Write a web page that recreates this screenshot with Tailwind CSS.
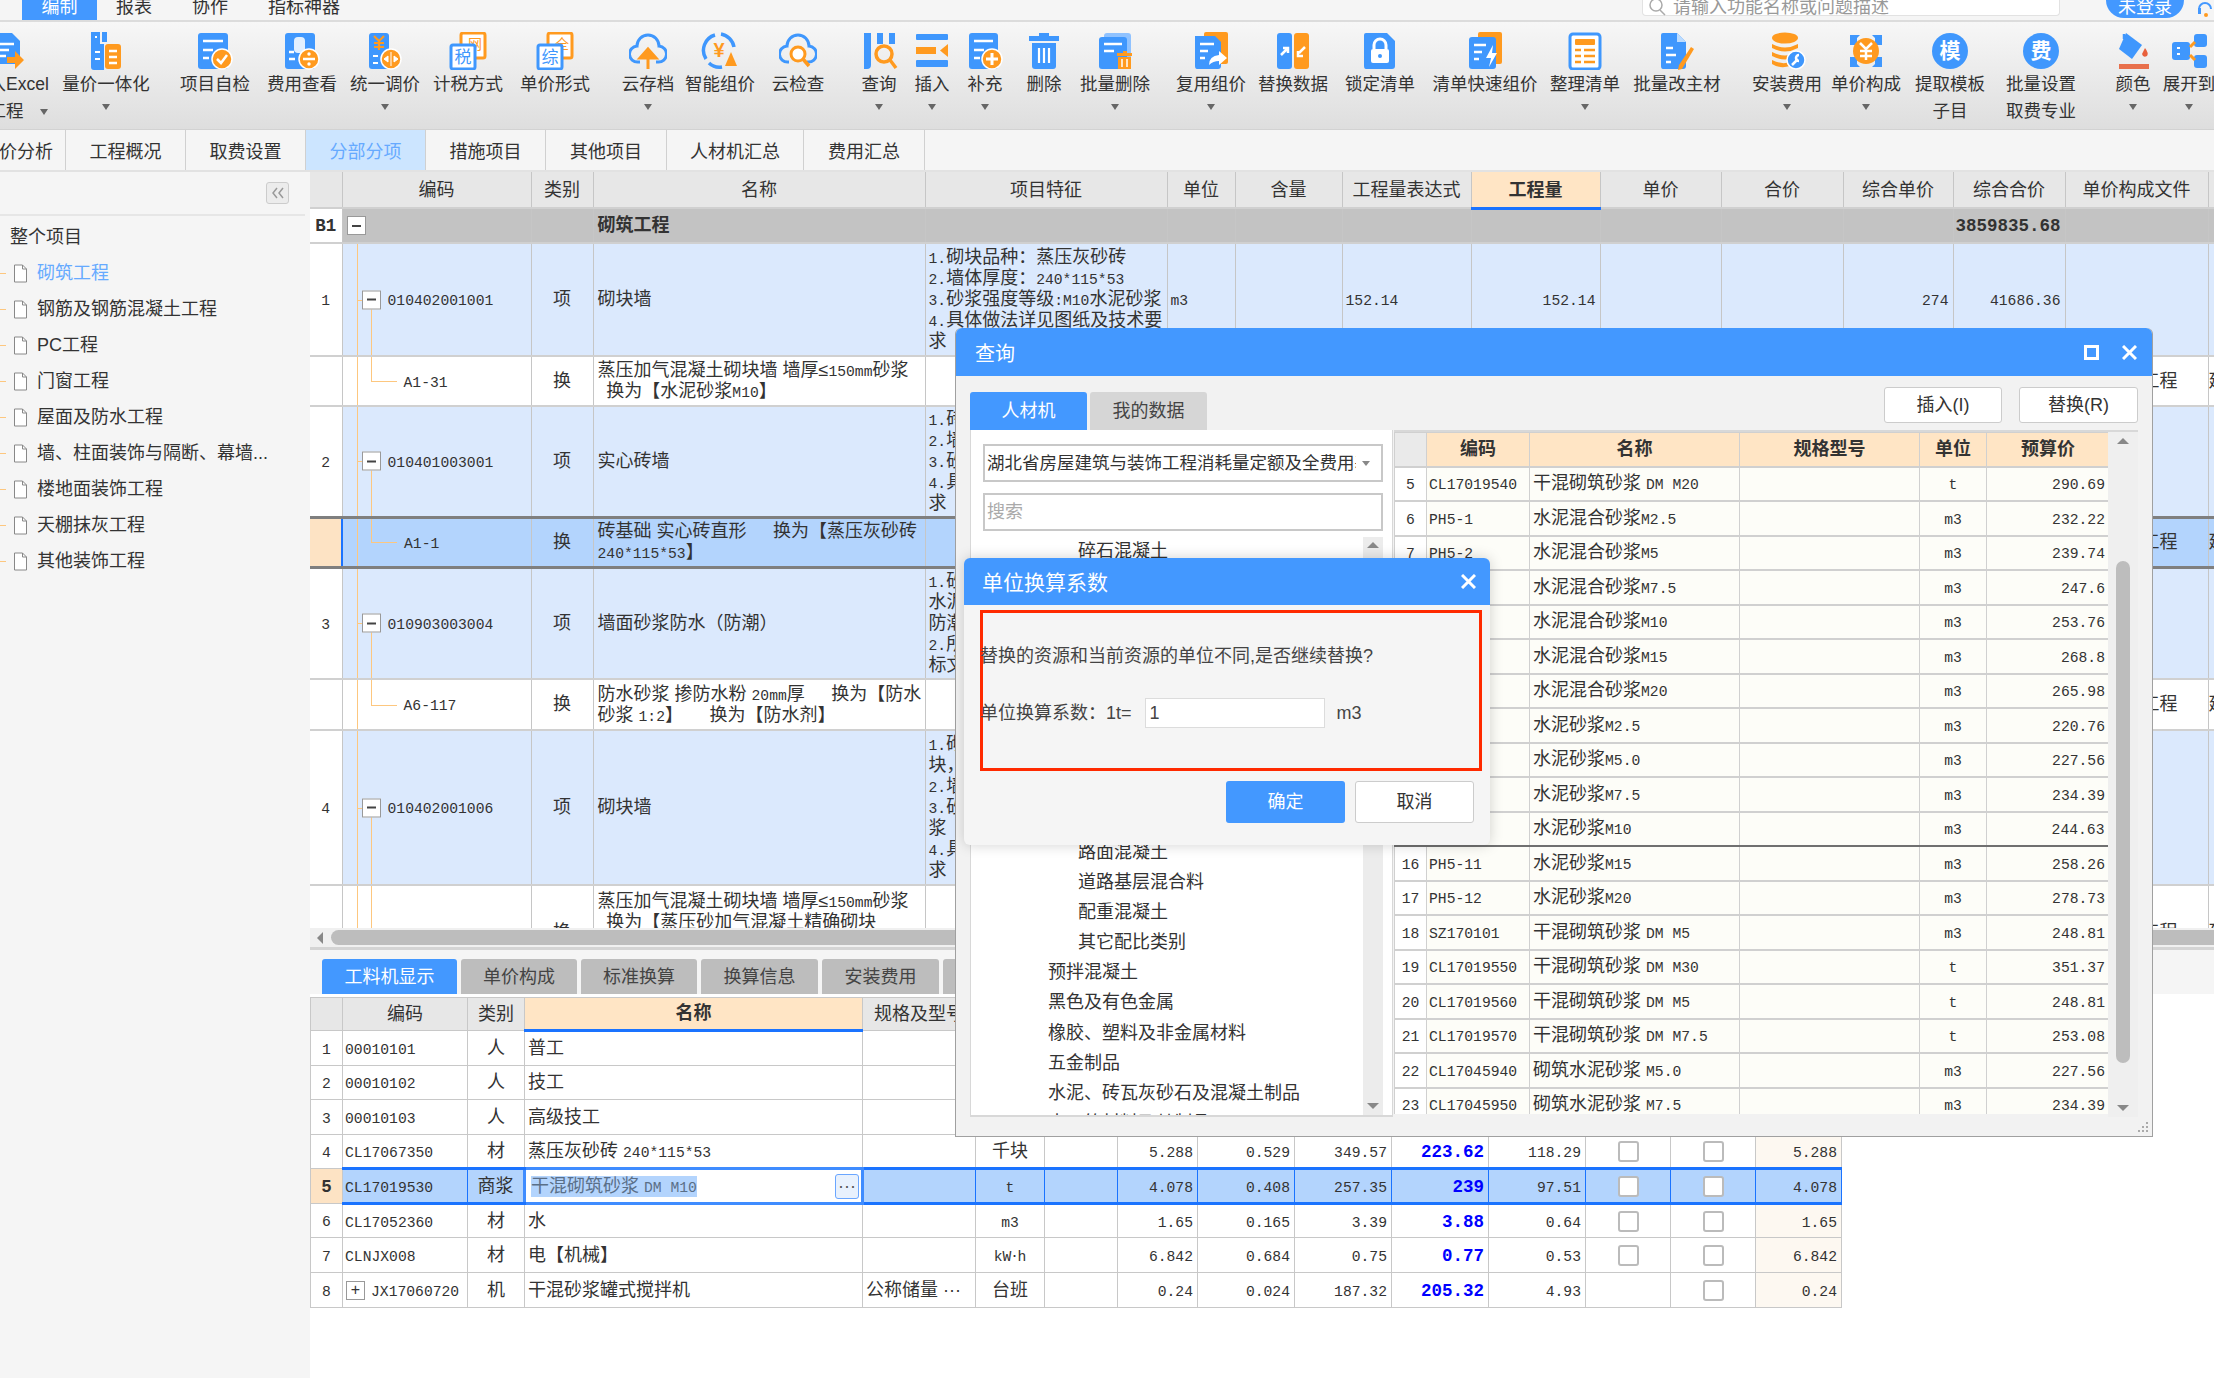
<!DOCTYPE html>
<html lang="zh-CN">
<head>
<meta charset="UTF-8">
<title>工程计价</title>
<script src="https://cdn.jsdelivr.net/npm/@tailwindcss/browser@4"></script>
</head>
<body class="relative w-[2214px] h-[1378px] overflow-hidden bg-white text-[18px] text-[#333] font-['Liberation_Sans','Noto_Sans_CJK_SC',sans-serif]">

<!-- 菜单栏 -->
<div class="flex items-start h-[22px] bg-[#f5f5f5] border-b-2 border-[#dcdcdc] overflow-hidden leading-[14px]">
  <div class="ml-[22px] w-[75px] h-[20px] bg-[#4398ff] text-white text-center">编制</div>
  <div class="ml-[19px]">报表</div>
  <div class="ml-[40px]">协作</div>
  <div class="ml-[40px]">指标神器</div>
  <div class="ml-auto w-[418px] h-[16px] bg-white rounded-b-[4px] border border-t-0 border-[#e2e2e2] flex items-start pl-[5px] text-[#999]">
    <svg class="w-[20px] h-[16px] shrink-0" viewBox="0 0 20 16"><circle cx="8" cy="5" r="6" fill="none" stroke="#aaa" stroke-width="1.5"/><path d="M12 10l5 5" stroke="#aaa" stroke-width="1.5"/></svg>
    <span class="ml-[5px]">请输入功能名称或问题描述</span>
  </div>
  <div class="ml-[46px] w-[78px] h-[18px] bg-[#4398ff] rounded-b-full text-white text-center">未登录</div>
  <svg class="ml-[13px] w-[17px] h-[18px] shrink-0" viewBox="0 0 17 18"><path d="M2 9a6 6 0 0 1 12 0" fill="none" stroke="#4398ff" stroke-width="2"/><rect x="1" y="8" width="3" height="6" fill="#4398ff"/><circle cx="9" cy="15" r="2" fill="#ff9a1f"/></svg>
</div>

<!-- 工具栏 -->
<div class="flex items-start h-[108px] pt-[10px] bg-gradient-to-b from-[#f7f7f7] to-[#dedede] border-b border-[#d2d2d2] overflow-hidden text-[17.5px]">
  <div class="ml-[-32px] w-[84px] shrink-0 flex flex-col items-center">
    <svg class="w-[38px] h-[38px]" viewBox="0 0 38 38"><path d="M4 1h17l8 8v23H4z" fill="#3f97fd"/><path d="M9 12h14M9 18h9M9 24h6" stroke="#fff" stroke-width="2.5"/><path d="M16 25h8v-6l9 9-9 9v-6h-8z" fill="#ff9a1f"/></svg>
    <span class="mt-[1px] leading-[27px] whitespace-nowrap">导入Excel</span>
    <span class="pl-[16px] leading-[27px] whitespace-nowrap flex items-center">工程<i class="ml-[16px] w-0 h-0 border-x-[4px] border-t-[6px] border-x-transparent border-t-[#666]"></i></span>
  </div>
  <div class="ml-[10px] w-[88px] shrink-0 flex flex-col items-center">
    <svg class="w-[38px] h-[38px]" viewBox="0 0 38 38"><path d="M4 0h9v12h4v26H7q-3 0-3-3z" fill="#3f97fd"/><path d="M15 0h5v10h-5z" fill="#3f97fd"/><path d="M8 5h2M8 20h5M8 27h5" stroke="#fff" stroke-width="2"/><rect x="18" y="12" width="16" height="25" rx="3" fill="#ff9a1f"/><path d="M22 19h8M22 25h8M22 31h8" stroke="#fff" stroke-width="2.5"/></svg>
    <span class="mt-[1px] leading-[27px] whitespace-nowrap">量价一体化</span>
    <i class="mt-[6px] w-0 h-0 border-x-[4px] border-t-[6px] border-x-transparent border-t-[#666]"></i>
  </div>
  <div class="ml-[30px] w-[70px] shrink-0 flex flex-col items-center">
    <svg class="w-[38px] h-[38px]" viewBox="0 0 38 38"><rect x="2" y="1" width="30" height="36" rx="3" fill="#3f97fd"/><path d="M7 9h20M7 18h10M7 26h6" stroke="#fff" stroke-width="2.5"/><circle cx="26" cy="27" r="10" fill="#ff9a1f" stroke="#fff" stroke-width="1.5"/><path d="M21 27l4 4 6-8" fill="none" stroke="#fff" stroke-width="2.5"/></svg>
    <span class="mt-[1px] leading-[27px] whitespace-nowrap">项目自检</span>
  </div>
  <div class="ml-[17px] w-[70px] shrink-0 flex flex-col items-center">
    <svg class="w-[38px] h-[38px]" viewBox="0 0 38 38"><rect x="2" y="1" width="30" height="36" rx="3" fill="#3f97fd"/><rect x="11" y="5" width="11" height="16" rx="4" fill="#fff" opacity=".85"/><path d="M6 20h5M6 27h6" stroke="#fff" stroke-width="2.5"/><circle cx="26" cy="27" r="10" fill="#ff9a1f" stroke="#fff" stroke-width="1.5"/><path d="M20 27h12" stroke="#fff" stroke-width="2.5"/><circle cx="26" cy="22" r="1.7" fill="#fff"/><circle cx="26" cy="32" r="1.7" fill="#fff"/></svg>
    <span class="mt-[1px] leading-[27px] whitespace-nowrap">费用查看</span>
  </div>
  <div class="ml-[13px] w-[70px] shrink-0 flex flex-col items-center">
    <svg class="w-[38px] h-[38px]" viewBox="0 0 38 38"><rect x="3" y="1" width="20" height="36" rx="3" fill="#3f97fd"/><path d="M8 4l5 5 5-5M13 9v9M8 11h10M8 15h10" fill="none" stroke="#ff9a1f" stroke-width="2.2"/><path d="M7 24h5M7 31h5" stroke="#fff" stroke-width="2"/><circle cx="25" cy="27" r="10" fill="#ff9a1f" stroke="#fff" stroke-width="1.5"/><path d="M25 20v14M22 24l-4 3 4 3zM28 24l4 3-4 3z" fill="#fff" stroke="#fff"/></svg>
    <span class="mt-[1px] leading-[27px] whitespace-nowrap">统一调价</span>
    <i class="mt-[6px] w-0 h-0 border-x-[4px] border-t-[6px] border-x-transparent border-t-[#666]"></i>
  </div>
  <div class="ml-[13px] w-[70px] shrink-0 flex flex-col items-center">
    <svg class="w-[38px] h-[38px]" viewBox="0 0 38 38"><rect x="12" y="1" width="24" height="25" rx="2" fill="#fff" stroke="#ff9a1f" stroke-width="3"/><text x="26" y="17" font-size="14" fill="#ff9a1f" text-anchor="middle">网</text><rect x="2" y="13" width="24" height="24" rx="2" fill="#fff" stroke="#3f97fd" stroke-width="3"/><text x="14" y="31" font-size="17" fill="#3f97fd" text-anchor="middle">税</text></svg>
    <span class="mt-[1px] leading-[27px] whitespace-nowrap">计税方式</span>
  </div>
  <div class="ml-[17px] w-[70px] shrink-0 flex flex-col items-center">
    <svg class="w-[38px] h-[38px]" viewBox="0 0 38 38"><rect x="12" y="1" width="24" height="25" rx="2" fill="#fff" stroke="#ff9a1f" stroke-width="3"/><text x="26" y="17" font-size="14" fill="#ff9a1f" text-anchor="middle">全</text><rect x="2" y="13" width="24" height="24" rx="2" fill="#fff" stroke="#3f97fd" stroke-width="3"/><text x="14" y="31" font-size="17" fill="#3f97fd" text-anchor="middle">综</text></svg>
    <span class="mt-[1px] leading-[27px] whitespace-nowrap">单价形式</span>
  </div>
  <div class="ml-[32px] w-[52px] shrink-0 flex flex-col items-center">
    <svg class="w-[38px] h-[38px]" viewBox="0 0 38 38"><path d="M11 30H9a8 8 0 0 1-1-16 11 11 0 0 1 22 0 8 8 0 0 1-1 16h-2" fill="none" stroke="#3f97fd" stroke-width="3"/><path d="M19 37V24M11 26l8-9 8 9z" fill="#ff9a1f" stroke="#ff9a1f" stroke-width="3"/></svg>
    <span class="mt-[1px] leading-[27px] whitespace-nowrap">云存档</span>
    <i class="mt-[6px] w-0 h-0 border-x-[4px] border-t-[6px] border-x-transparent border-t-[#666]"></i>
  </div>
  <div class="ml-[11px] w-[70px] shrink-0 flex flex-col items-center">
    <svg class="w-[38px] h-[38px]" viewBox="0 0 38 38"><path d="M14 3a16 16 0 0 0-9 24M20 2a16 16 0 0 1 13 13M8 31a15 15 0 0 0 13 4" fill="none" stroke="#3f97fd" stroke-width="3.5"/><text x="18" y="25" font-size="20" font-weight="700" fill="#ff9a1f" text-anchor="middle">¥</text><path d="M30 20l6 14h-12z" fill="#ff9a1f"/></svg>
    <span class="mt-[1px] leading-[27px] whitespace-nowrap">智能组价</span>
  </div>
  <div class="ml-[17px] w-[52px] shrink-0 flex flex-col items-center">
    <svg class="w-[38px] h-[38px]" viewBox="0 0 38 38"><path d="M10 30H9a8 8 0 0 1-1-16 11 11 0 0 1 22 0 8 8 0 0 1-1 16h-1" fill="none" stroke="#3f97fd" stroke-width="3"/><circle cx="19" cy="22" r="7" fill="#fff" stroke="#ff9a1f" stroke-width="3"/><path d="M24 27l6 7" stroke="#ff9a1f" stroke-width="3.5"/></svg>
    <span class="mt-[1px] leading-[27px] whitespace-nowrap">云检查</span>
  </div>
  <div class="ml-[37px] w-[36px] shrink-0 flex flex-col items-center">
    <svg class="w-[38px] h-[38px]" viewBox="0 0 38 38"><path d="M4 1h7v32q0 4-4 4H4zM17 1h6v11h-6zM29 1h6v11h-6z" fill="#3f97fd"/><circle cx="24" cy="22" r="8" fill="none" stroke="#ff9a1f" stroke-width="3.5"/><path d="M30 28l6 8" stroke="#ff9a1f" stroke-width="3.5"/></svg>
    <span class="mt-[1px] leading-[27px] whitespace-nowrap">查询</span>
    <i class="mt-[6px] w-0 h-0 border-x-[4px] border-t-[6px] border-x-transparent border-t-[#666]"></i>
  </div>
  <div class="ml-[17px] w-[36px] shrink-0 flex flex-col items-center">
    <svg class="w-[38px] h-[38px]" viewBox="0 0 38 38"><rect x="3" y="2" width="32" height="6" rx="1" fill="#3f97fd"/><rect x="3" y="15" width="20" height="7" fill="#ff9a1f"/><path d="M35 12v13l-8-6.500z" fill="#ff9a1f"/><rect x="3" y="28" width="32" height="7" rx="1" fill="#3f97fd"/></svg>
    <span class="mt-[1px] leading-[27px] whitespace-nowrap">插入</span>
    <i class="mt-[6px] w-0 h-0 border-x-[4px] border-t-[6px] border-x-transparent border-t-[#666]"></i>
  </div>
  <div class="ml-[17px] w-[36px] shrink-0 flex flex-col items-center">
    <svg class="w-[38px] h-[38px]" viewBox="0 0 38 38"><rect x="3" y="1" width="29" height="36" rx="3" fill="#3f97fd"/><path d="M8 9h19M8 18h10M8 26h6" stroke="#fff" stroke-width="2.5"/><circle cx="26" cy="27" r="10" fill="#ff9a1f" stroke="#fff" stroke-width="1.5"/><path d="M20 27h12M26 21v12" stroke="#fff" stroke-width="3"/></svg>
    <span class="mt-[1px] leading-[27px] whitespace-nowrap">补充</span>
    <i class="mt-[6px] w-0 h-0 border-x-[4px] border-t-[6px] border-x-transparent border-t-[#666]"></i>
  </div>
  <div class="ml-[23px] w-[36px] shrink-0 flex flex-col items-center">
    <svg class="w-[38px] h-[38px]" viewBox="0 0 38 38"><path d="M14 1h10v3h10v5H4V4h10z" fill="#3f97fd"/><path d="M7 11h24v23q0 3-3 3H10q-3 0-3-3z" fill="#3f97fd"/><path d="M14 16v15M19 16v15M24 16v15" stroke="#fff" stroke-width="2.2"/></svg>
    <span class="mt-[1px] leading-[27px] whitespace-nowrap">删除</span>
  </div>
  <div class="ml-[18px] w-[70px] shrink-0 flex flex-col items-center">
    <svg class="w-[38px] h-[38px]" viewBox="0 0 38 38"><rect x="8" y="1" width="27" height="32" rx="3" fill="#8fc2ff"/><rect x="3" y="5" width="28" height="32" rx="3" fill="#3f97fd"/><path d="M8 12h18M8 19h10" stroke="#fff" stroke-width="2.5"/><path d="M21 21h6v-2h4v2h5v3H21zM22 25h13v12H22z" fill="#ff9a1f"/><path d="M26 27v8M31 27v8" stroke="#fff" stroke-width="1.5"/></svg>
    <span class="mt-[1px] leading-[27px] whitespace-nowrap">批量删除</span>
    <i class="mt-[6px] w-0 h-0 border-x-[4px] border-t-[6px] border-x-transparent border-t-[#666]"></i>
  </div>
  <div class="ml-[26px] w-[70px] shrink-0 flex flex-col items-center">
    <svg class="w-[38px] h-[38px]" viewBox="0 0 38 38"><rect x="12" y="0" width="24" height="32" rx="2" fill="#ff9a1f"/><path d="M3 4h20l6 6v24q0 3-3 3H5q-2 0-2-3z" fill="#3f97fd"/><path d="M8 12h14M8 19h8M8 26h5" stroke="#fff" stroke-width="2.5"/><path d="M17 33q0-9 10-10v-4l8 7-8 7v-4q-6 0-10 4z" fill="#fff"/></svg>
    <span class="mt-[1px] leading-[27px] whitespace-nowrap">复用组价</span>
    <i class="mt-[6px] w-0 h-0 border-x-[4px] border-t-[6px] border-x-transparent border-t-[#666]"></i>
  </div>
  <div class="ml-[12px] w-[70px] shrink-0 flex flex-col items-center">
    <svg class="w-[38px] h-[38px]" viewBox="0 0 38 38"><rect x="3" y="1" width="15" height="36" rx="3" fill="#3f97fd"/><rect x="20" y="1" width="15" height="36" rx="3" fill="#ff9a1f"/><path d="M7 23l6-6M9 16h5v5" fill="none" stroke="#fff" stroke-width="2.5"/><path d="M31 15l-6 6M29 24h-5v-5" fill="none" stroke="#fff" stroke-width="2.5"/></svg>
    <span class="mt-[1px] leading-[27px] whitespace-nowrap">替换数据</span>
  </div>
  <div class="ml-[17px] w-[70px] shrink-0 flex flex-col items-center">
    <svg class="w-[38px] h-[38px]" viewBox="0 0 38 38"><path d="M5 1h21l8 8v25q0 3-3 3H5q-2 0-2-3V3q0-2 2-2z" fill="#3f97fd"/><rect x="10" y="17" width="18" height="14" rx="2" fill="#fff"/><path d="M13 17v-4a6 6 0 0 1 12 0v4" fill="none" stroke="#fff" stroke-width="3"/><circle cx="19" cy="24" r="2" fill="#3f97fd"/></svg>
    <span class="mt-[1px] leading-[27px] whitespace-nowrap">锁定清单</span>
  </div>
  <div class="ml-[17px] w-[106px] shrink-0 flex flex-col items-center">
    <svg class="w-[38px] h-[38px]" viewBox="0 0 38 38"><rect x="12" y="0" width="24" height="32" rx="2" fill="#ff9a1f"/><rect x="3" y="5" width="27" height="32" rx="3" fill="#3f97fd"/><path d="M8 13h12M8 20h8M8 27h5" stroke="#fff" stroke-width="2.5"/><path d="M27 13l-7 13h5l-2 9 8-14h-5z" fill="#fff"/></svg>
    <span class="mt-[1px] leading-[27px] whitespace-nowrap">清单快速组价</span>
  </div>
  <div class="ml-[12px] w-[70px] shrink-0 flex flex-col items-center">
    <svg class="w-[38px] h-[38px]" viewBox="0 0 38 38"><rect x="4" y="2" width="30" height="35" rx="3" fill="#fff" stroke="#3f97fd" stroke-width="3"/><rect x="9" y="7" width="20" height="6" rx="1" fill="#ff9a1f"/><path d="M9 18h6M18 18h11M9 24h6M18 24h11M9 30h6M18 30h11" stroke="#ff9a1f" stroke-width="2.500"/></svg>
    <span class="mt-[1px] leading-[27px] whitespace-nowrap">整理清单</span>
    <i class="mt-[6px] w-0 h-0 border-x-[4px] border-t-[6px] border-x-transparent border-t-[#666]"></i>
  </div>
  <div class="ml-[13px] w-[88px] shrink-0 flex flex-col items-center">
    <svg class="w-[38px] h-[38px]" viewBox="0 0 38 38"><path d="M5 1h14l9 9v24q0 3-3 3H5q-2 0-2-3V3q0-2 2-2z" fill="#3f97fd"/><path d="M19 1l9 9h-9z" fill="#bcdcff"/><path d="M8 16h7M8 23h10M8 30h5" stroke="#fff" stroke-width="2.5"/><path d="M33 15l3 2-12 20-4 1 1-5z" fill="#ff9a1f"/></svg>
    <span class="mt-[1px] leading-[27px] whitespace-nowrap">批量改主材</span>
  </div>
  <div class="ml-[31px] w-[70px] shrink-0 flex flex-col items-center">
    <svg class="w-[38px] h-[38px]" viewBox="0 0 38 38"><ellipse cx="17" cy="6" rx="13" ry="5.500" fill="#ff9a1f"/><path d="M4 12q13 7 26 0v4q-13 7-26 0zM4 20q13 7 26 0v4q-13 7-26 0zM4 28q10 5 18 2v4q-10 3-18-2z" fill="#ff9a1f"/><circle cx="28" cy="28" r="9" fill="#3f97fd" stroke="#fff" stroke-width="1.5"/><path d="M24 33l6-6M31 23a3 3 0 0 0 0 6" fill="none" stroke="#fff" stroke-width="2.500"/></svg>
    <span class="mt-[1px] leading-[27px] whitespace-nowrap">安装费用</span>
    <i class="mt-[6px] w-0 h-0 border-x-[4px] border-t-[6px] border-x-transparent border-t-[#666]"></i>
  </div>
  <div class="ml-[9px] w-[70px] shrink-0 flex flex-col items-center">
    <svg class="w-[38px] h-[38px]" viewBox="0 0 38 38"><path d="M3 3h10l-3 3v7H3zM35 3H25l3 3v7h7zM3 35h10l-3-3v-7H3zM35 35H25l3-3v-7h7z" fill="#3f97fd"/><circle cx="19" cy="19" r="13" fill="#ff9a1f"/><path d="M13 11l6 6 6-6M19 17v11M13 19h12M13 24h12" fill="none" stroke="#fff" stroke-width="2.500"/></svg>
    <span class="mt-[1px] leading-[27px] whitespace-nowrap">单价构成</span>
    <i class="mt-[6px] w-0 h-0 border-x-[4px] border-t-[6px] border-x-transparent border-t-[#666]"></i>
  </div>
  <div class="ml-[14px] w-[70px] shrink-0 flex flex-col items-center">
    <svg class="w-[38px] h-[38px]" viewBox="0 0 38 38"><circle cx="19" cy="19" r="18" fill="#3f97fd"/><text x="19" y="26" font-size="21" font-weight="700" fill="#fff" text-anchor="middle">模</text></svg>
    <span class="mt-[1px] leading-[27px] whitespace-nowrap">提取模板</span>
    <span class="leading-[27px] whitespace-nowrap">子目</span>
  </div>
  <div class="ml-[21px] w-[70px] shrink-0 flex flex-col items-center">
    <svg class="w-[38px] h-[38px]" viewBox="0 0 38 38"><circle cx="19" cy="19" r="18" fill="#3f97fd"/><text x="19" y="26" font-size="21" font-weight="700" fill="#fff" text-anchor="middle">费</text></svg>
    <span class="mt-[1px] leading-[27px] whitespace-nowrap">批量设置</span>
    <span class="leading-[27px] whitespace-nowrap">取费专业</span>
  </div>
  <div class="ml-[39px] w-[36px] shrink-0 flex flex-col items-center">
    <svg class="w-[38px] h-[38px]" viewBox="0 0 38 38"><path d="M12 1l16 12-10 14L5 17z" fill="#3f97fd"/><path d="M10 7V2" stroke="#3f97fd" stroke-width="2.500"/><path d="M31 16q4 5 2 8-4 2-5-2z" fill="#e8603c"/><rect x="5" y="32" width="30" height="5" fill="#e8704c"/></svg>
    <span class="mt-[1px] leading-[27px] whitespace-nowrap">颜色</span>
    <i class="mt-[6px] w-0 h-0 border-x-[4px] border-t-[6px] border-x-transparent border-t-[#666]"></i>
  </div>
  <div class="ml-[12px] w-[52px] shrink-0 flex flex-col items-center">
    <svg class="w-[38px] h-[38px]" viewBox="0 0 38 38"><rect x="2" y="10" width="18" height="18" rx="3" fill="#3f97fd"/><path d="M7 16h3M7 22h3" stroke="#fff" stroke-width="2"/><rect x="24" y="2" width="13" height="13" rx="3" fill="#3f97fd"/><rect x="24" y="23" width="13" height="13" rx="3" fill="#3f97fd"/><path d="M20 15l5-5M20 23l5 5" stroke="#ff9a1f" stroke-width="3"/></svg>
    <span class="mt-[1px] leading-[27px] whitespace-nowrap">展开到</span>
    <i class="mt-[6px] w-0 h-0 border-x-[4px] border-t-[6px] border-x-transparent border-t-[#666]"></i>
  </div>
</div>

<!-- 页签 -->
<div class="flex h-[42px] bg-[#f5f5f5] border-b-2 border-[#e2e2e2]">
  <div class="w-[66px] pt-[4px] flex items-center justify-end pr-[12px] border-r border-[#d0d0d0] whitespace-nowrap overflow-hidden">价分析</div>
  <div class="w-[120px] pt-[4px] flex items-center justify-center border-r border-[#d0d0d0]">工程概况</div>
  <div class="w-[120px] pt-[4px] flex items-center justify-center border-r border-[#d0d0d0]">取费设置</div>
  <div class="w-[120px] pt-[4px] flex items-center justify-center border-r border-[#d0d0d0] bg-[#cce5ff] text-[#66aaff]">分部分项</div>
  <div class="w-[120px] pt-[4px] flex items-center justify-center border-r border-[#d0d0d0]">措施项目</div>
  <div class="w-[121px] pt-[4px] flex items-center justify-center border-r border-[#d0d0d0]">其他项目</div>
  <div class="w-[137px] pt-[4px] flex items-center justify-center border-r border-[#d0d0d0]">人材机汇总</div>
  <div class="w-[121px] pt-[4px] flex items-center justify-center border-r border-[#d0d0d0]">费用汇总</div>
</div>

<div class="flex h-[1206px]">
  <!-- 左侧项目树 -->
  <div class="w-[310px] shrink-0 bg-[#f5f5f5] pr-[5px]">
    <div class="h-[44px] border-b-2 border-[#e6e6e6] flex justify-end items-start pt-[10px] pr-[16px]">
      <div class="w-[23px] h-[22px] rounded-[3px] border border-[#ccc] bg-[#ececec] flex items-center justify-center">
        <svg class="w-[14px] h-[12px]" viewBox="0 0 14 12"><path d="M6 1L2 6l4 5M12 1L8 6l4 5" fill="none" stroke="#999" stroke-width="1.500"/></svg>
      </div>
    </div>
    <div id="tree" class="pt-[3px] leading-[36px]"></div>
  </div>

  <!-- 右侧表格区 -->
  <div class="flex-1 min-w-0 flex flex-col">
    <div class="h-[756px] overflow-hidden">
      <table class="table-fixed border-collapse w-[1904px] leading-[21px]">
        <colgroup>
          <col class="w-[32px]"><col class="w-[189px]"><col class="w-[62px]"><col class="w-[332px]"><col class="w-[242px]"><col class="w-[68px]"><col class="w-[107px]"><col class="w-[129px]"><col class="w-[129px]"><col class="w-[121px]"><col class="w-[122px]"><col class="w-[110px]"><col class="w-[112px]"><col class="w-[143px]"><col class="w-[6px]">
        </colgroup>
        <tbody id="main"></tbody>
      </table>
    </div>
    <div class="h-[19px] bg-[#f0f0f0] flex items-center pl-[7px]">
      <i class="w-0 h-0 border-y-[6px] border-r-[6px] border-y-transparent border-r-[#888]"></i>
      <div class="ml-[8px] flex-1 h-[15px] rounded-l-full bg-[#bdbdbd]"></div>
    </div>
    <div class="h-[3px] bg-[#d4d4d4]"></div>
    <div class="h-[44px] bg-[#f5f5f5] flex items-end pl-[12px] gap-[4px]">
      <div class="w-[135px] h-[35px] pt-[2px] rounded-t-[3px] bg-[#4398ff] text-white flex items-center justify-center">工料机显示</div>
      <div class="w-[116px] h-[35px] pt-[2px] rounded-t-[3px] bg-[#bdbdbd] text-[#444] flex items-center justify-center">单价构成</div>
      <div class="w-[116px] h-[35px] pt-[2px] rounded-t-[3px] bg-[#bdbdbd] text-[#444] flex items-center justify-center">标准换算</div>
      <div class="w-[117px] h-[35px] pt-[2px] rounded-t-[3px] bg-[#bdbdbd] text-[#444] flex items-center justify-center">换算信息</div>
      <div class="w-[117px] h-[35px] pt-[2px] rounded-t-[3px] bg-[#bdbdbd] text-[#444] flex items-center justify-center">安装费用</div>
      <div class="w-[116px] h-[35px] rounded-t-[3px] bg-[#bdbdbd]"></div>
    </div>
    <div class="mt-[3px]">
      <table class="table-fixed border-collapse w-[1531px] leading-[21px]">
        <colgroup>
          <col class="w-[32px]"><col class="w-[125px]"><col class="w-[57px]"><col class="w-[338px]"><col class="w-[113px]"><col class="w-[69px]"><col class="w-[73px]"><col class="w-[80px]"><col class="w-[97px]"><col class="w-[97px]"><col class="w-[97px]"><col class="w-[97px]"><col class="w-[85px]"><col class="w-[85px]"><col class="w-[86px]">
        </colgroup>
        <tbody id="sub"></tbody>
      </table>
    </div>
  </div>
</div>

<!-- 查询窗口 -->
<div class="absolute left-[955px] top-[328px] w-[1198px] h-[809px] rounded-t-[6px] bg-[#f2f2f2] border border-[#a0a0a0] border-t-0 flex flex-col">
  <div class="h-[48px] shrink-0 rounded-t-[6px] bg-[#4398ff] text-white text-[20px] flex items-center pl-[19px] pr-[15px]">
    <span class="pt-[4px]">查询</span>
    <svg class="ml-auto w-[15px] h-[15px]" viewBox="0 0 15 15"><rect x="1.500" y="1.500" width="12" height="12" fill="none" stroke="#fff" stroke-width="3"/></svg>
    <svg class="ml-[23px] w-[15px] h-[15px]" viewBox="0 0 15 15"><path d="M1 1l13 13M14 1L1 14" stroke="#fff" stroke-width="3"/></svg>
  </div>
  <div class="h-[54px] shrink-0 flex items-end pl-[14px] pr-[14px]">
    <div class="w-[117px] h-[38px] rounded-t-[3px] bg-[#4398ff] text-white flex items-center justify-center">人材机</div>
    <div class="ml-[3px] w-[117px] h-[38px] rounded-t-[3px] bg-[#d6d6d6] text-[#444] flex items-center justify-center">我的数据</div>
    <div class="ml-auto mb-[7px] w-[118px] h-[36px] rounded-[3px] bg-white border border-[#ccc] flex items-center justify-center">插入(I)</div>
    <div class="ml-[17px] mb-[7px] w-[119px] h-[36px] rounded-[3px] bg-white border border-[#ccc] flex items-center justify-center">替换(R)</div>
  </div>
  <div class="h-[687px] shrink-0 flex pl-[14px] pr-[14px]">
    <div class="w-[423px] shrink-0 bg-white border-b-2 border-x border-[#d8d8d8] pl-[12px] pr-[9px] pt-[14px] flex flex-col">
      <div class="h-[38px] shrink-0 border-2 border-[#c8c8c8] flex items-center pl-[2px] pr-[11px] text-[17.5px] overflow-hidden">
        <span class="flex-1 whitespace-nowrap overflow-hidden">湖北省房屋建筑与装饰工程消耗量定额及全费用基价表</span>
        <i class="ml-[6px] w-0 h-0 border-x-[4px] border-t-[5px] border-x-transparent border-t-[#888]"></i>
      </div>
      <div class="mt-[11px] h-[38px] shrink-0 border-2 border-[#c8c8c8] flex items-center pl-[2px] text-[#aaa]">搜索</div>
      <div class="flex-1 min-h-0 flex">
        <div id="res" class="flex-1 pt-[5px] overflow-hidden text-[#333]"></div>
        <div class="w-[20px] shrink-0 mt-[6px] mb-0 bg-[#ececec] flex flex-col items-center justify-between pt-[5px] pb-[6px]">
          <i class="w-0 h-0 border-x-[6px] border-b-[6px] border-x-transparent border-b-[#888]"></i>
          <i class="w-0 h-0 border-x-[6px] border-t-[6px] border-x-transparent border-t-[#888]"></i>
        </div>
      </div>
    </div>
    <div class="ml-[1px] flex-1 min-w-0 flex border-t-2 border-[#d8d8d8]">
      <div class="w-[716px] h-[682px] overflow-hidden">
        <table class="table-fixed border-collapse w-[715px] leading-[21px]">
          <colgroup><col class="w-[32px]"><col class="w-[103px]"><col class="w-[210px]"><col class="w-[180px]"><col class="w-[67px]"><col class="w-[123px]"></colgroup>
          <tbody id="qry"></tbody>
        </table>
      </div>
      <div class="w-[30px] h-[685px] bg-[#efefef] flex flex-col items-center pt-[6px] pb-[6px]">
        <i class="w-0 h-0 border-x-[6px] border-b-[6px] border-x-transparent border-b-[#888]"></i>
        <div class="mt-[117px] w-[14px] h-[502px] rounded-full bg-[#bdbdbd]"></div>
        <i class="mt-auto w-0 h-0 border-x-[6px] border-t-[6px] border-x-transparent border-t-[#888]"></i>
      </div>
    </div>
  </div>
  <div class="flex-1 flex justify-end items-end pr-[3px] pb-[3px]">
    <svg class="w-[12px] h-[12px]" viewBox="0 0 12 12" fill="#aaa"><rect x="9" y="1" width="2" height="2"/><rect x="5" y="5" width="2" height="2"/><rect x="9" y="5" width="2" height="2"/><rect x="1" y="9" width="2" height="2"/><rect x="5" y="9" width="2" height="2"/><rect x="9" y="9" width="2" height="2"/></svg>
  </div>
</div>

<!-- 单位换算系数 -->
<div class="absolute left-[964px] top-[558px] w-[526px] h-[287px] rounded-[6px] bg-[#f5f5f5] shadow-[0_0_14px_rgba(0,0,0,0.18)]">
  <div class="h-[47px] rounded-t-[6px] bg-[#4398ff] text-white text-[21px] flex items-center pl-[18px] pr-[14px]">
    <span class="pt-[2px]">单位换算系数</span>
    <svg class="ml-auto w-[15px] h-[15px]" viewBox="0 0 15 15"><path d="M1 1l13 13M14 1L1 14" stroke="#fff" stroke-width="3"/></svg>
  </div>
  <div class="mt-[5px] ml-[16px] mr-[8px] h-[161px] border-[3px] border-[#ff2a00] flex flex-col text-[#444]">
    <div class="mt-[30px] ml-[-3px] whitespace-nowrap leading-[27px]">替换的资源和当前资源的单位不同,是否继续替换?</div>
    <div class="mt-[28px] ml-[-3px] flex items-center whitespace-nowrap">
      <span>单位换算系数：1t=</span>
      <div class="ml-[13px] w-[180px] h-[30px] bg-white border border-[#dcdcdc] flex items-center pl-[4px]">1</div>
      <span class="ml-[12px]">m3</span>
    </div>
  </div>
  <div class="mt-[10px] flex justify-end pr-[16px] gap-[10px]">
    <div class="w-[119px] h-[42px] rounded-[3px] bg-[#4398ff] text-white flex items-center justify-center">确定</div>
    <div class="w-[119px] h-[42px] rounded-[3px] bg-white border border-[#ccc] flex items-center justify-center">取消</div>
  </div>
</div>

<script>
// 半角字符用等宽字体，宽度接近宋体
const M = s => String(s).replace(/[\x21-\x7e][\x20-\x7e]*/g, m => `<span class="font-['Liberation_Mono',monospace] text-[14.7px] leading-none">${m}</span>`);
// 粗体数字比普通数字大一号
const MB = s => `<span class="font-['Liberation_Mono',monospace] text-[17.5px] font-bold leading-none">${s}</span>`;

// 左侧树
const treeNames = ['砌筑工程','钢筋及钢筋混凝土工程','PC工程','门窗工程','屋面及防水工程','墙、柱面装饰与隔断、幕墙...','楼地面装饰工程','天棚抹灰工程','其他装饰工程'];
let treeHtml = '<div class="h-[36px] pl-[10px] whitespace-nowrap">整个项目</div>';
treeNames.forEach((n, i) => {
  treeHtml += '<div class="h-[36px] flex items-center whitespace-nowrap">' +
    '<i class="w-[6px] border-t border-dashed border-[#fdc77f]"></i>' +
    '<svg class="ml-[7px] w-[15px] h-[19px] shrink-0" viewBox="0 0 15 19"><path d="M1.500 1h8l4 4v13h-12z" fill="#fff" stroke="#888"/><path d="M9.500 1v4h4" fill="none" stroke="#888"/></svg>' +
    '<span class="ml-[9px] ' + (i === 0 ? 'text-[#66aaff]' : '') + '">' + n + '</span></div>';
});
document.getElementById('tree').innerHTML = treeHtml;

// 上方分部分项表
const vl = 'border-r border-[#c6c6c6]';
const emptyTd = '<td class="border-r border-[#c6c6c6]"></td>';
const minusBox = '<span class="absolute left-[19px] top-1/2 -translate-y-1/2 w-[19px] h-[19px] bg-white border border-[#999] flex items-center justify-center"><i class="w-[9px] h-[2px] bg-[#444]"></i></span>';
const treeV = '<i class="absolute left-[14px] top-0 bottom-0 border-l border-[#fdc77f]"></i>';
const codeCell = (r, border) => {
  if (r.kind === 'item') {
    return '<td class="relative ' + vl + '">' + treeV +
      '<i class="absolute left-[14px] top-1/2 w-[6px] border-t border-[#fdc77f]"></i>' +
      '<i class="absolute left-[28px] top-1/2 bottom-0 border-l border-[#fdc77f]"></i>' + minusBox +
      '<span class="block pl-[45px] whitespace-nowrap">' + M(r.code) + '</span></td>';
  }
  return '<td class="relative ' + vl + ' ' + border + '">' + treeV +
    '<i class="absolute left-[28px] top-0 h-1/2 border-l border-[#fdc77f]"></i>' +
    '<i class="absolute left-[28px] top-1/2 w-[26px] border-t border-[#fdc77f]"></i>' +
    '<span class="block pl-[61px] whitespace-nowrap">' + M(r.code) + '</span></td>';
};
const mainRows = [
  {h:'h-[113px]',kind:'item',no:1,code:'010402001001',type:'项',name:'砌块墙',feat:'1.砌块品种：蒸压灰砂砖<br>2.墙体厚度：240*115*53<br>3.砂浆强度等级:M10水泥砂浆<br>4.具体做法详见图纸及技术要<br>求',unit:'m3',expr:'152.14',qty:'152.14',up:'274',total:'41686.36'},
  {h:'h-[50px]',kind:'child',code:'A1-31',type:'换',name:'蒸压加气混凝土砌块墙 墙厚≤150mm砂浆<br>&nbsp;换为【水泥砂浆M10】'},
  {h:'h-[111px]',kind:'item',no:2,code:'010401003001',type:'项',name:'实心砖墙',feat:'1.砖品种：蒸压灰砂砖<br>2.墙体厚度：240*115*53<br>3.砂浆强度等级:M10水泥砂浆<br>4.具体做法详见图纸及技术要<br>求'},
  {h:'h-[50px]',kind:'sel',code:'A1-1',type:'换',name:'砖基础 实心砖直形&nbsp;&nbsp;&nbsp;换为【蒸压灰砂砖<br>240*115*53】'},
  {h:'h-[112px]',kind:'item',no:3,code:'010903003004',type:'项',name:'墙面砂浆防水（防潮）',feat:'1.砂浆厚度、配合比：20厚<br>水泥砂浆<br>防潮层<br>2.所有做法详见招标图纸及招<br>标文件'},
  {h:'h-[51px]',kind:'child',code:'A6-117',type:'换',name:'防水砂浆 掺防水粉 20mm厚&nbsp;&nbsp;&nbsp;换为【防水<br>砂浆 1:2】&nbsp;&nbsp;&nbsp;换为【防水剂】'},
  {h:'h-[155px]',kind:'item',no:4,code:'010402001006',type:'项',name:'砌块墙',feat:'1.砌块品种：蒸压砂加气混凝土<br>块，240*115*53<br>2.墙体厚度：200<br>3.砂浆强度等级:M10水泥砂<br>浆<br>4.具体做法详见图纸及技术要<br>求'},
  {h:'h-[95px]',kind:'child',code:'A1-31',type:'换',name:'蒸压加气混凝土砌块墙 墙厚≤150mm砂浆<br>&nbsp;换为【蒸压砂加气混凝土精确砌块<br>&nbsp;<br>&nbsp;'}
];
let mainHtml = '<tr class="h-[36px] bg-[#e7e7e7] border-b-2 border-[#d0d0d0] text-center">' +
  ['','编码','类别','名称','项目特征','单位','含量','工程量表达式'].map(t => '<td class="' + vl + ' pt-[2px] whitespace-nowrap">' + t + '</td>').join('') +
  '<td class="' + vl + ' pt-[2px] bg-[#ffe5c5] font-bold border-b-[3px] border-b-[#1a73ff]">工程量</td>' +
  ['单价','合价','综合单价','综合合价','单价构成文件',''].map(t => '<td class="' + vl + ' pt-[2px] whitespace-nowrap">' + t + '</td>').join('') + '</tr>';
mainHtml += '<tr class="h-[35px] bg-[#c3c3c3] border-b-2 border-[#d0d0d0]"><td class="bg-white text-center ' + vl + '">' + MB('B1') + '</td>' +
  '<td class="relative ' + vl + '"><span class="absolute left-[4px] top-[7px] w-[19px] h-[19px] bg-white border border-[#999] flex items-center justify-center"><i class="w-[9px] h-[2px] bg-[#444]"></i></span></td>' + emptyTd +
  '<td class="' + vl + ' pl-[4px] font-bold">砌筑工程</td>' + emptyTd.repeat(8) +
  '<td class="' + vl + ' text-right pr-[4px] whitespace-nowrap">' + MB('3859835.68') + '</td>' + emptyTd.repeat(2) + '</tr>';
mainRows.forEach(r => {
  const bg = r.kind === 'item' ? 'bg-[#dbe9fd]' : r.kind === 'sel' ? 'bg-[#b3d4fd]' : 'bg-white';
  const rowLine = r.kind === 'sel' ? 'border-y-[3px] border-[#7f7f7f]' : 'border-b-2 border-[#d0d0d0]';
  const isChild = r.kind !== 'item';
  mainHtml += '<tr class="' + r.h + ' ' + bg + ' ' + rowLine + '">' +
    '<td class="text-center ' + vl + ' ' + (r.kind === 'sel' ? 'bg-[#fde3c4]' : 'bg-white') + '">' + M(r.no || '') + '</td>' +
    codeCell(r, r.kind === 'sel' ? 'border-l-2 border-l-[#1a73ff]' : '') +
    '<td class="text-center ' + vl + '">' + r.type + '</td>' +
    '<td class="' + vl + ' pl-[4px] whitespace-nowrap overflow-hidden">' + M(r.name) + '</td>' +
    '<td class="' + vl + ' pl-[3px] whitespace-nowrap overflow-hidden">' + M(r.feat || '') + '</td>' +
    '<td class="' + vl + ' pl-[3px]">' + M(r.unit || '') + '</td>' +
    emptyTd +
    '<td class="' + vl + ' pl-[3px]">' + M(r.expr || '') + '</td>' +
    '<td class="' + vl + ' text-right pr-[4px]">' + M(r.qty || '') + '</td>' +
    emptyTd + emptyTd +
    '<td class="' + vl + ' text-right pr-[4px]">' + M(r.up || '') + '</td>' +
    '<td class="' + vl + ' text-right pr-[4px]">' + M(r.total || '') + '</td>' +
    '<td class="' + vl + ' pl-[4px] whitespace-nowrap overflow-hidden">' + (isChild ? '建筑装饰工程' : '') + '</td>' +
    '<td class="whitespace-nowrap overflow-hidden">' + (isChild ? '建筑' : '') + '</td></tr>';
});
document.getElementById('main').innerHTML = mainHtml;

// 下方工料机表
const cb = '<span class="block mx-auto w-[21px] h-[21px] rounded-[3px] border-2 border-[#bbb] bg-white"></span>';
const subRows = [
  ['h-[35px]',1,'00010101','人','普工','','','','','','','','',0,0,''],
  ['h-[34px]',2,'00010102','人','技工','','','','','','','','',0,0,''],
  ['h-[35px]',3,'00010103','人','高级技工','','','','','','','','',0,0,''],
  ['h-[34px]',4,'CL17067350','材','蒸压灰砂砖 240*115*53','','千块','','5.288','0.529','349.57','223.62','118.29',1,1,'5.288'],
  ['h-[35px]',5,'CL17019530','商浆','干混砌筑砂浆 DM M10','','t','','4.078','0.408','257.35','239','97.51',1,1,'4.078'],
  ['h-[34px]',6,'CL17052360','材','水','','m3','','1.65','0.165','3.39','3.88','0.64',1,1,'1.65'],
  ['h-[35px]',7,'CLNJX008','材','电【机械】','','kW·h','','6.842','0.684','0.75','0.77','0.53',1,1,'6.842'],
  ['h-[35px]',8,'JX17060720','机','干混砂浆罐式搅拌机','公称储量 ···','台班','','0.24','0.024','187.32','205.32','4.93',0,1,'0.24']
];
const line = 'border border-[#c8c8c8]';
let subHtml = '<tr class="h-[33px] bg-[#e7e7e7] text-center">' +
  '<td class="' + line + '"></td><td class="' + line + '">编码</td><td class="' + line + '">类别</td>' +
  '<td class="' + line + ' bg-[#ffe5c5] font-bold border-b-[3px] border-b-[#1a73ff]">名称</td>' +
  '<td class="' + line + ' whitespace-nowrap overflow-hidden">规格及型号</td>' + ('<td class="' + line + '"></td>').repeat(10) + '</tr>';
subRows.forEach(r => {
  const sel = r[1] === 5;
  const c = sel ? 'border border-y-[3px] border-[#1a73ff] bg-[#b3d4fd]' : line;
  const num = v => '<td class="' + c + ' text-right pr-[4px]">' + M(v) + '</td>';
  const box = v => '<td class="' + c + '">' + (v ? cb : '') + '</td>';
  let name;
  if (sel) {
    name = '<td class="border-[3px] border-[#3f8cff] bg-white"><div class="flex items-center pl-[5px] pr-[2px]"><span class="bg-[#b3d4fd] text-[#5a6f88] whitespace-nowrap">' + M(r[4]) + '</span>' +
      '<span class="ml-auto w-[24px] h-[25px] rounded-[3px] border border-[#6aa6ff] bg-[#e8f1fd] flex items-center justify-center text-[#555] leading-none">···</span></div></td>';
  } else {
    name = '<td class="' + line + ' pl-[3px] whitespace-nowrap overflow-hidden">' + M(r[4]) + '</td>';
  }
  const code = r[1] === 8
    ? '<div class="flex items-center pl-[3px] whitespace-nowrap"><span class="w-[19px] h-[19px] shrink-0 border border-[#999] bg-white flex items-center justify-center text-[16px] leading-none">+</span><span class="ml-[6px]">' + M(r[2]) + '</span></div>'
    : '<div class="pl-[2px]">' + M(r[2]) + '</div>';
  const bold = v => '<td class="' + c + ' text-right pr-[4px] text-[#0000ff]">' + (v ? MB(v) : '') + '</td>';
  subHtml += '<tr class="' + r[0] + ' bg-white">' +
    '<td class="' + line + ' text-center ' + (sel ? 'bg-[#fde3c4]' : '') + '">' + (sel ? MB(r[1]) : M(r[1])) + '</td>' +
    '<td class="' + c + ' overflow-hidden">' + code + '</td>' +
    '<td class="' + c + ' text-center">' + r[3] + '</td>' + name +
    '<td class="' + c + ' pl-[3px] whitespace-nowrap overflow-hidden">' + r[5] + '</td>' +
    '<td class="' + c + ' text-center whitespace-nowrap">' + M(r[6]) + '</td>' +
    '<td class="' + c + '">' + r[7] + '</td>' +
    num(r[8]) + num(r[9]) + num(r[10]) + bold(r[11]) + num(r[12]) + box(r[13]) + box(r[14]) +
    '<td class="' + c + (sel ? '' : ' bg-[#fdf8f1]') + ' text-right pr-[4px]">' + M(r[15]) + '</td></tr>';
});
document.getElementById('sub').innerHTML = subHtml;

// 查询结果表
const qryRows = [
  [5,'CL17019540','干混砌筑砂浆 DM M20','t','290.69'],[6,'PH5-1','水泥混合砂浆M2.5','m3','232.22'],[7,'PH5-2','水泥混合砂浆M5','m3','239.74'],
  [8,'PH5-3','水泥混合砂浆M7.5','m3','247.6'],[9,'PH5-4','水泥混合砂浆M10','m3','253.76'],[10,'PH5-5','水泥混合砂浆M15','m3','268.8'],
  [11,'PH5-6','水泥混合砂浆M20','m3','265.98'],[12,'PH5-7','水泥砂浆M2.5','m3','220.76'],[13,'PH5-8','水泥砂浆M5.0','m3','227.56'],
  [14,'PH5-9','水泥砂浆M7.5','m3','234.39'],[15,'PH5-10','水泥砂浆M10','m3','244.63'],[16,'PH5-11','水泥砂浆M15','m3','258.26'],
  [17,'PH5-12','水泥砂浆M20','m3','278.73'],[18,'SZ170101','干混砌筑砂浆 DM M5','m3','248.81'],[19,'CL17019550','干混砌筑砂浆 DM M30','t','351.37'],
  [20,'CL17019560','干混砌筑砂浆 DM M5','t','248.81'],[21,'CL17019570','干混砌筑砂浆 DM M7.5','t','253.08'],[22,'CL17045940','砌筑水泥砂浆 M5.0','m3','227.56'],
  [23,'CL17045950','砌筑水泥砂浆 M7.5','m3','234.39']
];
const qh = 'border border-[#d0d0d0] bg-[#ffe5c5] font-bold border-b-[#5aa0ff]';
let qryHtml = '<tr class="h-[34px] text-center"><td class="border border-[#d0d0d0] bg-[#eaeaea]"></td>' +
  ['编码','名称','规格型号','单位','预算价'].map(t => '<td class="' + qh + '">' + t + '</td>').join('') + '</tr>';
qryRows.forEach(r => {
  const hot = r[0] === 15;
  const c = hot ? 'border border-y-2 border-[#d0d0d0] border-y-[#707070]' : 'border border-y-2 border-[#d0d0d0]';
  qryHtml += '<tr class="h-[34.5px] bg-[#fdfdf8]">' +
    '<td class="' + c + ' bg-white text-center">' + M(r[0]) + '</td>' +
    '<td class="' + c + ' pl-[2px] whitespace-nowrap overflow-hidden">' + M(r[1]) + '</td>' +
    '<td class="' + c + ' pl-[3px] whitespace-nowrap">' + M(r[2]) + '</td>' +
    '<td class="' + c + '"></td>' +
    '<td class="' + c + ' text-center">' + M(r[3]) + '</td>' +
    '<td class="' + c + (hot ? ' border-r-2 border-r-[#707070]' : '') + ' text-right pr-[4px]">' + M(r[4]) + '</td></tr>';
});
document.getElementById('qry').innerHTML = qryHtml;

// 查询窗口左侧资源树
const res = [
  [3,'碎石混凝土'],[3,'砾石混凝土'],[3,'轻骨料混凝土'],[3,'泵送混凝土'],[3,'水下混凝土'],[3,'防水混凝土'],[3,'细石混凝土'],[3,'陶粒混凝土'],[3,'砌筑砂浆'],[3,'抹灰砂浆'],
  [3,'路面混凝土'],[3,'道路基层混合料'],[3,'配重混凝土'],[3,'其它配比类别'],
  [2,'预拌混凝土'],[2,'黑色及有色金属'],[2,'橡胶、塑料及非金属材料'],[2,'五金制品'],[2,'水泥、砖瓦灰砂石及混凝土制品'],[2,'木、竹材料及其制品']
];
document.getElementById('res').innerHTML = res.map(r =>
  '<div class="h-[30.1px] leading-[30px] whitespace-nowrap ' + (r[0] === 3 ? 'pl-[95px]' : 'pl-[65px]') + '">' + r[1] + '</div>').join('');
</script>
</body>
</html>
